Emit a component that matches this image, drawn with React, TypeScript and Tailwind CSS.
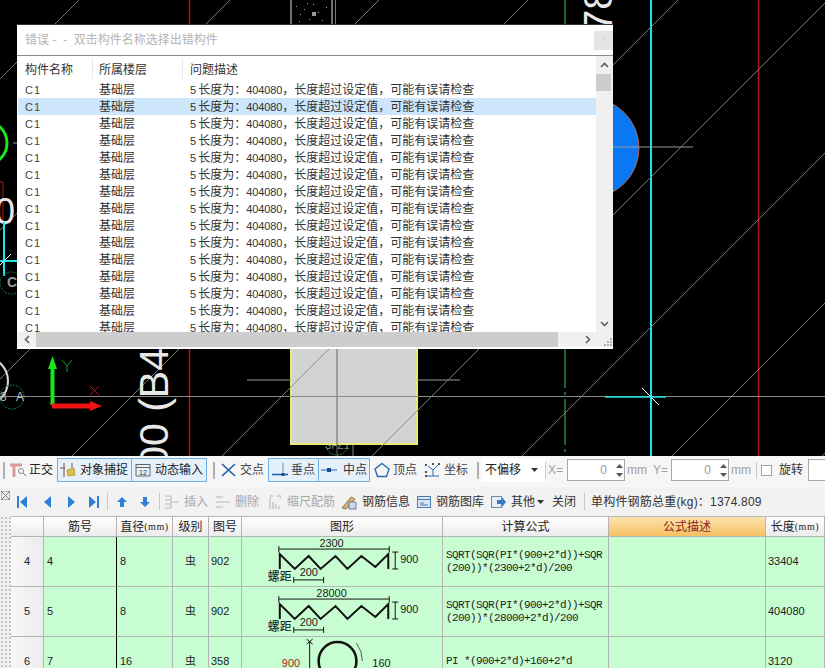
import type { ReactNode } from "react";

const ROW_COUNT = 15;

/* ── CAD canvas drawing ───────────────────────────────────────── */
function CadDrawing() {
  const diagonals = [79, 230, 379, 528, 678, 828, 978, 1128, 1278];
  return (
    <svg width={825} height={456} viewBox="0 0 825 456" className="block">
      {/* axis bubble sits behind the block */}
      <circle cx={337} cy={444} r={11} fill="none" stroke="#1f9a3a" strokeDasharray="2 1" />
      <text x={337} y={449} textAnchor="middle" fontSize={10} fill="#888">SFZ1</text>
      <line x1={353} y1={444} x2={353} y2={456} stroke="#888" />

      {/* grey column block */}
      <rect x={291} y={340} width={126} height={104} fill="#d2d2d2" stroke="#eaea70" strokeWidth={2} />
      <line x1={247} y1={380} x2={291} y2={380} stroke="#999" />
      <line x1={417} y1={380} x2={460} y2={380} stroke="#999" />
      <line x1={337} y1={340} x2={337} y2={456} stroke="#666" />

      {/* speckled strip at the top */}
      <line x1={291} y1={0} x2={291} y2={25} stroke="#ddd" />
      <line x1={332} y1={0} x2={332} y2={25} stroke="#ddd" />
      <rect x={335} y={0} width={1} height={25} fill="#777" />
      {[[296, 6], [300, 14], [304, 9], [309, 19], [313, 4], [318, 12], [322, 20], [326, 7], [299, 21], [307, 3]].map(([x, y]) => (
        <rect key={`${x}-${y}`} x={x} y={y} width={1} height={1} fill="#aaa" />
      ))}
      <rect x={312} y={12} width={4} height={4} fill="#999" />

      {/* grid lines */}
      <line x1={189.5} y1={0} x2={189.5} y2={456} stroke="#b01818" strokeWidth={1.5} />
      <line x1={758.5} y1={0} x2={758.5} y2={456} stroke="#b01818" strokeWidth={1.5} />
      <line x1={565} y1={0} x2={565} y2={456} stroke="#3fc74a" strokeDasharray="46 4 3 4" />
      <line x1={651} y1={0} x2={651} y2={456} stroke="#1ce6e6" strokeWidth={2} />
      <line x1={0} y1={396.5} x2={825} y2={396.5} stroke="#8a8a8a" />

      {/* blue pile circle */}
      <circle cx={589} cy={148} r={50} fill="#0a78f5" stroke="#b4604a" />
      <line x1={600} y1={147} x2={693} y2={147} stroke="#999" />

      {diagonals.map(s => (
        <line key={s} x1={s} y1={0} x2={s - 456} y2={456} stroke="#858585" strokeWidth={0.9} />
      ))}

      {/* cross marker */}
      <line x1={605} y1={397} x2={666} y2={397} stroke="#1ce6e6" strokeWidth={1.5} />
      <line x1={642} y1={388} x2={659} y2={405} stroke="#fff" />

      {/* rotated dimension text */}
      <text transform="translate(612 32) rotate(-90)" fontSize={40} fill="#e8e8e8">78</text>
      <text transform="translate(168 348) rotate(-90)" textAnchor="end" fontSize={41} fill="#e8e8e8">00 (B4</text>

      {/* left edge fragments */}
      <circle cx={-15} cy={143} r={22} fill="none" stroke="#19e619" strokeWidth={3} />
      <line x1={13} y1={143} x2={17} y2={143} stroke="#999" />
      <path d="M0 182H3V223" fill="none" stroke="#b01818" />
      <text x={15} y={224} textAnchor="end" fontSize={36} fill="#e8e8e8">0</text>
      <line x1={4} y1={222} x2={4} y2={276} stroke="#1ce6e6" strokeWidth={2} />
      <line x1={0} y1={261} x2={17} y2={261} stroke="#1ce6e6" strokeWidth={2} />
      <line x1={0} y1={265} x2={11} y2={254} stroke="#fff" />
      <circle cx={11} cy={283} r={11} fill="none" stroke="#1f7a3a" strokeDasharray="2 1" />
      <text x={7} y={287} fontSize={14} fontWeight={700} fill="#999">C</text>
      <circle cx={-16} cy={381} r={24} fill="none" stroke="#dcdcdc" strokeWidth={2} />
      <circle cx={12} cy={397} r={12} fill="none" stroke="#1f7a3a" strokeDasharray="2 1" />
      <text x={0} y={401} fontSize={12} fill="#aaa">3</text>
      <text x={16} y={401} fontSize={12} fill="#bbb">A</text>

      {/* UCS axes */}
      <path d="M50.5 405V369H48L52.5 356L57 369H54.5V405Z" fill="#19e619" />
      <path d="M52 403.5H90V401L102 406L90 411V408.5H52Z" fill="#f01414" />
      <path d="M62 360L67 366L72 360M67 366V372" fill="none" stroke="#129a30" />
      <path d="M90 386L99 395M99 386L90 395" fill="none" stroke="#c01414" />
    </svg>
  );
}

/* ── Error dialog ─────────────────────────────────────────────── */
function ErrorDialog() {
  return (
    <div className="absolute left-[17px] top-[25px] w-[596px] h-[324px] bg-white flex flex-col text-[12px] text-[#333] shadow-[0_-1px_0_#333]">
      <div className="h-[31px] shrink-0 flex items-center justify-between pl-2 border-b border-[#8a8a8a]">
        <span className="text-[#b4b4b4] whitespace-pre">错误 -  -  双击构件名称选择出错构件</span>
        <span className="w-[19px] h-[19px] bg-[#e4e4e4] flex items-center justify-center text-[9px] text-[#d4d4d4]">×</span>
      </div>
      <div className="h-[276px] shrink-0 flex">
        <div className="w-[579px] pl-px overflow-hidden">
          <div className="grid grid-cols-[75px_90px_1fr] h-[25px] items-center">
            <span className="pl-[7px] border-r border-[#e8e8e8] h-[21px] leading-[24px]">构件名称</span>
            <span className="pl-[6px] border-r border-[#e8e8e8] h-[21px] leading-[24px]">所属楼层</span>
            <span className="pl-[7px] h-[21px] leading-[24px]">问题描述</span>
          </div>
          {Array.from({ length: ROW_COUNT }, (_, i) => (
            <div key={i} className={`grid grid-cols-[75px_90px_1fr] h-[17px] leading-[19px] whitespace-nowrap ${i === 1 ? "bg-[#cde6fb]" : ""}`}>
              <span className="pl-[7px] text-[11px] tracking-[1px] text-[#444]">C1</span>
              <span className="pl-[6px]">基础层</span>
              <span className="pl-[7px]">
                <span className="text-[11px] pr-[2px]">5</span>长度为：<span className="text-[11px] tracking-[-0.1px]">404080</span>，长度超过设定值，可能有误请检查
              </span>
            </div>
          ))}
        </div>
        <div className="w-[17px] bg-[#f0f0f0] flex flex-col">
          <div className="h-[18px] flex items-center justify-center">
            <svg width={9} height={6} viewBox="0 0 9 6"><path d="M1 5L4.5 1.5L8 5" fill="none" stroke="#606060" strokeWidth={1.6} /></svg>
          </div>
          <div className="h-[17px] w-[15px] bg-[#cdcdcd]" />
          <div className="flex-1" />
          <div className="h-[17px] flex items-center justify-center">
            <svg width={9} height={6} viewBox="0 0 9 6"><path d="M1 1L4.5 4.5L8 1" fill="none" stroke="#606060" strokeWidth={1.6} /></svg>
          </div>
        </div>
      </div>
      <div className="h-[15px] shrink-0 flex">
        <div className="w-[19px] bg-[#f0f0f0] flex items-center justify-center">
          <svg width={6} height={9} viewBox="0 0 6 9"><path d="M5 1L1.5 4.5L5 8" fill="none" stroke="#606060" strokeWidth={1.6} /></svg>
        </div>
        <div className="w-[522px] bg-[#cdcdcd]" />
        <div className="w-[38px] bg-[#f0f0f0] flex items-center justify-end pr-[5px]">
          <svg width={6} height={9} viewBox="0 0 6 9"><path d="M1 1L4.5 4.5L1 8" fill="none" stroke="#606060" strokeWidth={1.6} /></svg>
        </div>
        <div className="w-[17px] bg-[#f0f0f0] flex items-end justify-end">
          <svg width={10} height={10} viewBox="0 0 10 10" fill="#b0b0b0">
            <rect x={7} y={1} width={2} height={2} /><rect x={4} y={4} width={2} height={2} /><rect x={7} y={4} width={2} height={2} />
            <rect x={1} y={7} width={2} height={2} /><rect x={4} y={7} width={2} height={2} /><rect x={7} y={7} width={2} height={2} />
          </svg>
        </div>
      </div>
    </div>
  );
}

/* ── Toolbar icons ────────────────────────────────────────────── */
const Ico = ({ w = 16, children }: { w?: number; children: ReactNode }) => (
  <svg width={w} height={16} viewBox={`0 0 ${w} 16`} className="shrink-0">{children}</svg>
);

function Grip({ className }: { className: string }) {
  return <div className={`w-[2px] h-[17px] bg-[radial-gradient(#b0b0b0_1px,transparent_1px)] bg-size-[2px_4px] ${className}`} />;
}

const Sep = ({ className }: { className: string }) => <div className={`w-px h-[17px] bg-[#c8c8c8] ${className}`} />;

function Spin({ width, value }: { width: string; value: string }) {
  return (
    <div className={`${width} h-[22px] shrink-0 bg-white border border-[#a8a8a8] flex items-center justify-end`}>
      <span className="text-[#9a9a9a] text-[12px] pr-[7px]">{value}</span>
      <div className="w-[10px] flex flex-col gap-[5px] items-center">
        <svg width={7} height={4} viewBox="0 0 7 4"><path d="M3.5 0L7 4H0Z" fill="#555" /></svg>
        <svg width={7} height={4} viewBox="0 0 7 4"><path d="M0 0H7L3.5 4Z" fill="#555" /></svg>
      </div>
    </div>
  );
}

function TopToolbar() {
  const active = "h-[24px] border border-[#6db0e6] bg-[#e4f1fb] flex items-center shrink-0";
  const plain = "flex items-center shrink-0";
  return (
    <div className="h-[31px] shrink-0 bg-[#f6f6f6] flex items-center text-[12px] text-[#222] pb-[3px] overflow-hidden">
      <Grip className="ml-[3px] mr-[5px] shrink-0" />
      <div className={`${plain} w-[47px] gap-[2px]`}>
        <Ico w={17}>
          <path d="M0 3H12M4 3V15" fill="none" stroke="#d99a9a" strokeWidth={3} />
          <circle cx={11} cy={9} r={2.5} fill="#f6f6f6" stroke="#8a8a8a" />
          <path d="M13 11L16 14" stroke="#777" />
        </Ico>
        <span>正交</span>
      </div>
      <div className={`${active} w-[75px] pl-[2px] gap-[4px]`}>
        <Ico>
          <path d="M0 6H5M4 1V15" stroke="#8a4a2a" fill="none" />
          <path d="M7 8L14 6L15 13L8 14Z" fill="#e0bc4a" stroke="#a88420" strokeWidth={0.6} />
          <path d="M12 1V6" stroke="#8a4a2a" />
        </Ico>
        <span>对象捕捉</span>
      </div>
      <div className={`${active} w-[75px] border-l-0 pl-[3px] gap-[4px]`}>
        <Ico>
          <path d="M1 2.5H15M1 5.5H15M15 2V14H1V2" fill="none" stroke="#666" />
          <text x={8} y={13} fontSize={7} textAnchor="middle" fill="#333">12</text>
        </Ico>
        <span>动态输入</span>
      </div>
      <Grip className="ml-[6px] mr-[6px] shrink-0" />
      <div className={`${plain} w-[47px] gap-[4px]`}>
        <Ico w={15}><path d="M1 2L14 14M14 2L1 14" stroke="#1f5ca8" strokeWidth={1.6} fill="none" /></Ico>
        <span className="text-[#444]">交点</span>
      </div>
      <div className={`${active} w-[51px] pl-[3px] gap-[3px]`}>
        <Ico><path d="M0 12.5H16" stroke="#1f5ca8" strokeWidth={1.5} /><path d="M11 1V14" stroke="#6a90c0" /><rect x={9.5} y={11} width={3} height={3} fill="#1f4c90" /></Ico>
        <span className="text-[#444]">垂点</span>
      </div>
      <div className={`${active} w-[51px] border-l-0 pl-[2px] gap-[6px]`}>
        <Ico><path d="M0 8H16" stroke="#1f5ca8" /><rect x={6} y={6} width={4} height={4} fill="#1f4c90" /></Ico>
        <span className="text-[#333]">中点</span>
      </div>
      <div className={`${plain} w-[51px] pl-[4px] gap-[3px]`}>
        <Ico><path d="M8 1.5L15 7L12.5 14.5H3.5L1 7Z" fill="none" stroke="#2a6cb0" strokeWidth={1.4} /></Ico>
        <span className="text-[#444]">顶点</span>
      </div>
      <div className={`${plain} w-[51px] pl-[3px] gap-[3px]`}>
        <Ico w={17}>
          <path d="M9 8L14 3M9 8L4 4M9 8V14M2 14H15" fill="none" stroke="#2a6cb0" />
          <g fill="#555"><rect x={1} y={2} width={2} height={2} /><rect x={14} y={1} width={2} height={2} /><rect x={8} y={1} width={2} height={2} /><rect x={1} y={9} width={2} height={2} /><rect x={1} y={13} width={2} height={2} /></g>
        </Ico>
        <span className="text-[#444]">坐标</span>
      </div>
      <Grip className="ml-[5px] mr-[3px] shrink-0" />
      <div className="w-[63px] h-[24px] bg-white shrink-0 flex items-center justify-between pl-[3px] pr-[7px]">
        <span>不偏移</span>
        <svg width={7} height={4} viewBox="0 0 7 4"><path d="M0 0H7L3.5 4Z" fill="#333" /></svg>
      </div>
      <Sep className="mr-[2px] shrink-0" />
      <span className="w-[19px] shrink-0 text-[#a0a0a0]">X=</span>
      <Spin width="w-[58px]" value="0" />
      <span className="w-[25px] pl-[2px] shrink-0 text-[#a0a0a0]">mm</span>
      <span className="w-[21px] pl-[3px] shrink-0 text-[#a0a0a0]">Y=</span>
      <Spin width="w-[58px]" value="0" />
      <span className="w-[25px] pl-[2px] shrink-0 text-[#a0a0a0]">mm</span>
      <Sep className="ml-[2px] shrink-0" />
      <div className="w-[11px] h-[11px] ml-[4px] border border-[#a0a0a0] bg-white shrink-0" />
      <span className="ml-[7px] w-[29px] shrink-0 text-[#333]">旋转</span>
      <div className="w-[60px] h-[22px] bg-white border border-[#a8a8a8] shrink-0" />
    </div>
  );
}

function NavIcon({ d }: { d: string }) {
  return (
    <svg width={12} height={14} viewBox="0 0 12 14" className="shrink-0">
      <path d={d} fill="#2f7fd6" />
    </svg>
  );
}

function SecondToolbar() {
  return (
    <div className="h-[29px] shrink-0 bg-[#f2f2f2] flex items-center text-[12px] overflow-hidden whitespace-nowrap">
      <div className="w-[11px] h-full shrink-0 flex flex-col items-center pt-[4px]">
        <svg width={9} height={9} viewBox="0 0 9 9"><path d="M0 0H9V9H0ZM0 0L9 9M9 0L0 9" fill="none" stroke="#777" /></svg>
      </div>
      <div className="w-[31px] pl-[5px] shrink-0"><NavIcon d="M1 1H3V13H1ZM11 1V13L4 7Z" /></div>
      <div className="w-[23px] shrink-0"><NavIcon d="M9 1V13L2 7Z" /></div>
      <div className="w-[23px] shrink-0"><NavIcon d="M3 1L10 7L3 13Z" /></div>
      <div className="w-[19px] shrink-0"><NavIcon d="M1 1L8 7L1 13ZM9 1H11V13H9Z" /></div>
      <Sep className="mr-[8px] shrink-0" />
      <div className="w-[23px] shrink-0"><NavIcon d="M6 2L11 7H8V12H4V7H1Z" /></div>
      <div className="w-[20px] shrink-0"><NavIcon d="M4 2H8V7H11L6 12L1 7H4Z" /></div>
      <Sep className="mr-[4px] shrink-0" />
      <div className="w-[51px] shrink-0 flex items-center gap-[4px] text-[#a8a8a8]">
        <Ico><path d="M1 2H7V14H1M1 6H7M1 10H7M8 8H15" fill="none" stroke="#b8b8b8" /></Ico>
        <span>插入</span>
      </div>
      <div className="w-[54px] shrink-0 flex items-center gap-[4px] text-[#a8a8a8]">
        <Ico><path d="M1 3H8M1 8H15M1 13H8" fill="none" stroke="#b8b8b8" /></Ico>
        <span>删除</span>
      </div>
      <div className="w-[72px] shrink-0 flex items-center gap-[6px] text-[#a8a8a8]">
        <Ico w={12}><path d="M1 15V3M1 2H4M8 2H12M12 2V5M4 15V8M7 15V10M10 15V12" fill="none" stroke="#b0b0b0" /></Ico>
        <span>缩尺配筋</span>
      </div>
      <div className="w-[76px] shrink-0 flex items-center gap-[5px] text-[#333]">
        <Ico><path d="M1 14L10 3L14 5L5 15Z" fill="#d8b070" stroke="#805030" strokeWidth={0.7} /><path d="M8 8H15V15H8Z" fill="#c8dcf0" stroke="#506080" strokeWidth={0.8} /></Ico>
        <span>钢筋信息</span>
      </div>
      <div className="w-[74px] shrink-0 flex items-center gap-[5px] text-[#333]">
        <Ico w={14}><rect x={0.5} y={2.5} width={13} height={11} fill="#d8e6f4" stroke="#4a7cb0" /><path d="M1 5.5H13M3 9H7M3 11H11" stroke="#4a7cb0" /></Ico>
        <span>钢筋图库</span>
      </div>
      <div className="w-[61px] shrink-0 flex items-center gap-[5px] text-[#333]">
        <Ico w={15}><rect x={0.5} y={2.5} width={10} height={11} fill="#e8eef6" stroke="#7a8aa0" /><path d="M6 6H11V3L15 8L11 13V10H6Z" fill="#3a7cc8" /></Ico>
        <span className="-mr-[3px]">其他</span>
        <svg width={7} height={4} viewBox="0 0 7 4"><path d="M0 0H7L3.5 4Z" fill="#333" /></svg>
      </div>
      <span className="w-[32px] shrink-0 text-[#333]">关闭</span>
      <Sep className="mr-[6px] shrink-0" />
      <span className="text-[#333] tracking-[0.2px]">单构件钢筋总重(kg)：1374.809</span>
    </div>
  );
}

/* ── Rebar shapes ─────────────────────────────────────────────── */
function SpiralShape({ length }: { length: string }) {
  return (
    <svg width={201} height={49} viewBox="0 0 201 49" className="block">
      <path d="M37 12H148M37 9V15M148 9V15" stroke="#111" fill="none" />
      <text x={90} y={10} textAnchor="middle" fontSize={11} fill="#222">{length}</text>
      <path d="M38 32V17L53 32L67 19L79 32L94 19L106 32L120 19L134 30L147 17V32" fill="none" stroke="#111" strokeWidth={2} />
      <path d="M154 15V32M151 15H157M151 32H157" stroke="#111" fill="none" />
      <text x={159} y={26} fontSize={11} fill="#222">900</text>
      <text x={26} y={44} fontSize={12} fill="#111">螺距</text>
      <text x={58} y={39} fontSize={11} fill="#222">200</text>
      <path d="M52 43H82M52 40V46M82 40V46" stroke="#111" fill="none" />
    </svg>
  );
}

function RingShape() {
  return (
    <svg width={201} height={49} viewBox="0 0 201 49" className="block">
      <text x={40} y={30} fontSize={11} fill="#b02020">900</text>
      <path d="M68 48V4M65 2L71 7M71 2L65 7" stroke="#111" fill="none" />
      <circle cx={96} cy={24} r={19} fill="none" stroke="#111" strokeWidth={2.5} />
      <path d="M115 6Q121 14 121 24" stroke="#555" fill="none" />
      <text x={131} y={30} fontSize={11} fill="#222">160</text>
    </svg>
  );
}

/* ── Rebar table ──────────────────────────────────────────────── */
const TABLE_ROWS = [
  { no: "4", bar: "4", dia: "8", fig: "902", shape: <SpiralShape length="2300" />, formula: ["SQRT(SQR(PI*(900+2*d))+SQR", "(200))*(2300+2*d)/200"], len: "33404" },
  { no: "5", bar: "5", dia: "8", fig: "902", shape: <SpiralShape length="28000" />, formula: ["SQRT(SQR(PI*(900+2*d))+SQR", "(200))*(28000+2*d)/200"], len: "404080" },
  { no: "6", bar: "7", dia: "16", fig: "358", shape: <RingShape />, formula: ["PI *(900+2*d)+160+2*d"], len: "3120" },
];

const mmClass = "font-[family-name:'Liberation_Serif',serif] text-[10px] tracking-[0.6px]";

function RebarTable() {
  const head = "flex items-center justify-center border-r border-b border-[#b4b4b4] bg-linear-to-b from-white to-[#ececec] text-[12px] text-[#222] whitespace-nowrap";
  const cell = "flex items-center border-r border-b border-[#b4b4b4] bg-[#c8fdd2] text-[11px] text-[#222]";
  return (
    <div className="flex-1 flex min-h-0">
      <div className="w-[11px] shrink-0 bg-[#f0f0f0] bg-[radial-gradient(#c6c6c6_1px,transparent_1px)] bg-size-[4px_4px]" />
      <div className="flex-1 grid grid-cols-[33px_73px_56px_36px_33px_201px_166px_157px_59px] grid-rows-[20px_50px_50px_50px] border-t border-[#b8b8b8] overflow-hidden">
        <div className={head} />
        <div className={head}>筋号</div>
        <div className={head}>直径<span className={mmClass}>(mm)</span></div>
        <div className={head}>级别</div>
        <div className={head}>图号</div>
        <div className={head}>图形</div>
        <div className={head}>计算公式</div>
        <div className="flex items-center justify-center border-r border-b border-[#b4b4b4] bg-linear-to-b from-[#fbe3ae] to-[#f7c060] text-[12px] text-[#8c1c1c]">公式描述</div>
        <div className={head}>长度<span className={mmClass}>(mm)</span></div>
        {TABLE_ROWS.map(r => (
          <div key={r.no} className="contents">
            <div className="flex items-center justify-center border-r border-b border-[#b4b4b4] bg-linear-to-r from-[#f7f7f7] to-[#ececec] text-[11px] text-[#222]">{r.no}</div>
            <div className={`${cell} pl-[3px] border-r-black`}>{r.bar}</div>
            <div className={`${cell} pl-[3px]`}>{r.dia}</div>
            <div className={`${cell} justify-center text-[10px]`}>虫</div>
            <div className={`${cell} pl-[2px]`}>{r.fig}</div>
            <div className={cell}>{r.shape}</div>
            <div className={`${cell} pl-[3px] font-[family-name:'Liberation_Mono',monospace] tracking-[-0.6px]`}>
              <div className="leading-[13px] whitespace-nowrap">
                {r.formula.map(l => <div key={l}>{l}</div>)}
              </div>
            </div>
            <div className={cell} />
            <div className={`${cell} pl-[2px]`}>{r.len}</div>
          </div>
        ))}
      </div>
    </div>
  );
}

export default function App() {
  return (
    <div className="w-[825px] h-[668px] overflow-hidden flex flex-col bg-[#f0f0f0] font-[family-name:'Liberation_Sans','Noto_Sans_CJK_SC',sans-serif]">
      <div className="relative h-[456px] shrink-0 bg-black overflow-hidden">
        <CadDrawing />
        <ErrorDialog />
      </div>
      <TopToolbar />
      <SecondToolbar />
      <RebarTable />
    </div>
  );
}
